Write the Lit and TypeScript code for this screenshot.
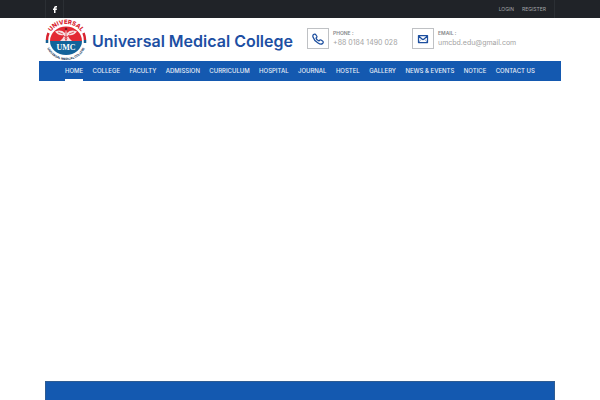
import { LitElement, html, css } from "lit";
import { customElement } from "lit/decorators.js";

const NAV = [
  "Home", "College", "Faculty", "Admission", "Curriculum", "Hospital",
  "Journal", "Hostel", "Gallery", "News & Events", "Notice", "Contact Us",
];

@customElement("umc-logo")
export class UmcLogo extends LitElement {
  static styles = css`
    :host { display: block; }
    svg { display: block; width: 42px; height: 43px; overflow: visible; }
    text { font-family: Inter, "Liberation Sans", sans-serif; font-weight: 800; }
    .upper { font-size: 6px; fill: #d8232f; }
    .lower { font-size: 3px; fill: #26415f; }
    .mark { font-family: "Liberation Serif", serif; font-size: 8px; font-weight: 700; fill: #fff; }
  `;

  render() {
    return html`
      <svg viewBox="0 0 42 43" role="img" aria-label="Universal Medical College logo">
        <defs>
          <path id="top" d="M4 21A17 15 0 0 1 38 21" />
          <path id="bottom" d="M1 24A20 18 0 0 0 41 24" />
        </defs>
        <path d="M2 22A19 19 0 0 1 3.500 15" fill="none" stroke="#d8232f" stroke-width="2.500" />
        <path d="M40 22A19 19 0 0 0 38.500 15" fill="none" stroke="#d8232f" stroke-width="2.500" />
        <path d="M2 22V25M40 22V25" fill="none" stroke="#155f93" stroke-width="2.500" />
        <path d="M5 23A16 14.500 0 0 1 37 23Z" fill="#e32934" />
        <path d="M5 23A16 14 0 0 0 37 23Z" fill="#12639a" />
        <path d="M10 13.500Q16 11 20 15L21 11L22 15Q26 11 32 13.500Q29 18 23 17L24 20L27 23H15L18 20L19 17Q13 18 10 13.500Z" fill="#f6dfe0" />
        <path d="M21 12V23M18 18Q24 19 21 22M24 18Q18 19 21 22M13 14L18 16M29 14L24 16" fill="none" stroke="#d8232f" stroke-width="0.700" />
        <circle cx="21" cy="11" r="1.300" fill="#7b1820" />
        <text class="upper" text-anchor="middle"><textPath href="#top" startOffset="50%">UNIVERSAL</textPath></text>
        <text class="lower" text-anchor="middle"><textPath href="#bottom" startOffset="50%">UNIVERSAL MEDICAL COLLEGE</textPath></text>
        <text class="mark" x="21" y="32" text-anchor="middle">UMC</text>
      </svg>
    `;
  }
}

@customElement("app-root")
export class AppRoot extends LitElement {
  static styles = css`
    :host {
      display: flex;
      flex-direction: column;
      min-height: 100vh;
      background: #fff;
      font-family: Inter, "Liberation Sans", sans-serif;
    }
    * { box-sizing: border-box; }
    a { color: inherit; text-decoration: none; }
    .topbar { background: #202328; }
    .container { width: 85%; margin: 0 auto; }
    .bar {
      display: flex;
      justify-content: space-between;
      height: 18px;
      border: 1px solid #2b2f34;
      border-width: 0 1px;
    }
    .social {
      display: flex;
      align-items: center;
      justify-content: center;
      width: 18px;
      border-right: 1px solid #2b2f34;
    }
    .social svg { width: 4px; height: 7px; }
    .account {
      display: flex;
      align-items: center;
      gap: 8px;
      padding-right: 8px;
      color: #a3a5a8;
      font-size: 5px;
    }
    .header { display: flex; height: 43px; }
    .brand {
      display: flex;
      align-items: center;
      gap: 5px;
      width: 262px;
    }
    .brand h1 {
      margin: 0;
      padding-top: 2px;
      color: #1d4fa3;
      font: 600 16px/20px Inter, "Liberation Sans", sans-serif;
      white-space: nowrap;
    }
    .contacts { display: flex; padding-top: 10px; }
    .contact { display: flex; gap: 4px; width: 105px; }
    .badge {
      display: flex;
      align-items: center;
      justify-content: center;
      flex: none;
      width: 22px;
      height: 21px;
      border: 1px solid #bfc1c4;
    }
    .badge svg { width: 12px; height: 12px; fill: none; stroke: #1d4f9f; }
    .label {
      color: #85878a;
      font-size: 5px;
      font-weight: 600;
      line-height: 10px;
      text-transform: uppercase;
    }
    .value {
      display: block;
      color: #a3a3a3;
      font-size: 7px;
      line-height: 9px;
      white-space: nowrap;
    }
    .nav { width: 87%; margin: 0 auto; padding: 0 26px; background: #1459b0; }
    .nav ul {
      display: flex;
      justify-content: space-between;
      margin: 0;
      padding: 0;
      list-style: none;
    }
    .nav a {
      display: block;
      height: 20px;
      border-bottom: 2px solid transparent;
      color: #e6edf6;
      font-size: 6px;
      font-weight: 500;
      line-height: 20px;
      text-transform: uppercase;
      white-space: nowrap;
    }
    .nav .active { border-color: #fff; }
    .hero { flex: 1; }
    .band { height: 19px; background: #1459b0; border: 1px solid #2f5c92; border-bottom: 0; }
  `;

  render() {
    return html`
      <div class="topbar">
        <div class="container bar">
          <a class="social" href="#" aria-label="Facebook">
            <svg viewBox="0 0 8 14"><path fill="#fff" d="M2 14V8H0V5H2V3.500Q2 0 5.500 0H8V3H6Q5 3 5 4V5H8L7.500 8H5V14Z" /></svg>
          </a>
          <div class="account"><a href="#">LOGIN</a><a href="#">REGISTER</a></div>
        </div>
      </div>
      <header class="container header">
        <a class="brand" href="#">
          <umc-logo></umc-logo>
          <h1>Universal Medical College</h1>
        </a>
        <div class="contacts">
          <div class="contact">
            <span class="badge">
              <svg viewBox="0 0 24 24" stroke-width="2.500" stroke-linejoin="round"><path d="M3 3Q6 1 8 4L10 7Q10 9 8 10Q9 14 14 16Q16 13 18 14L21 16Q24 18 21 21Q18 24 12 20Q4 15 2 8Q1 5 3 3Z" /></svg>
            </span>
            <div><div class="label">Phone :</div><div class="value">+88 0184 1490 028</div></div>
          </div>
          <div class="contact">
            <span class="badge">
              <svg viewBox="0 0 24 24" stroke-width="2.500" stroke-linejoin="round"><path d="M3 5H21V19H3ZM3 6L10 12Q12 14 14 12L21 6" /><path d="M4 18L8 13M20 18L16 13" stroke-width="1" /></svg>
            </span>
            <div><div class="label">Email :</div><a class="value" href="mailto:umcbd.edu@gmail.com">umcbd.edu@gmail.com</a></div>
          </div>
        </div>
      </header>
      <nav class="nav" aria-label="Main">
        <ul>
          ${NAV.map((item, i) => html`<li><a href="#" class=${i === 0 ? "active" : ""}>${item}</a></li>`)}
        </ul>
      </nav>
      <main class="hero"></main>
      <section class="container band"></section>
    `;
  }
}
